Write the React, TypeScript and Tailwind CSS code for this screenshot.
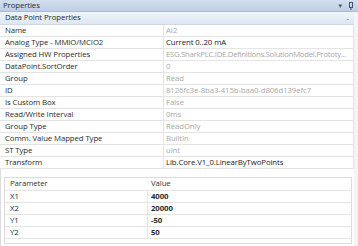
import React from "react";

const rows: { label: string; value: string; dim?: boolean; tight?: boolean }[] = [
  { label: "Name", value: "AI2", dim: true },
  { label: "Analog Type - MMIO/MCIO2", value: "Current 0..20 mA" },
  { label: "Assigned HW Properties", value: "ESG.SharkPLC.IDE.Definitions.SolutionModel.Prototy...", dim: true, tight: true },
  { label: "DataPoint.SortOrder", value: "0", dim: true },
  { label: "Group", value: "Read", dim: true },
  { label: "ID", value: "8126fc3e-8ba3-415b-baa0-d806d139efc7", dim: true },
  { label: "Is Custom Box", value: "False", dim: true },
  { label: "Read/Write Interval", value: "0ms", dim: true },
  { label: "Group Type", value: "ReadOnly", dim: true },
  { label: "Comm. Value Mapped Type", value: "BuiltIn", dim: true },
  { label: "ST Type", value: "uint", dim: true },
  { label: "Transform", value: "Lib.Core.V1_0.LinearByTwoPoints" },
];

const params = [
  { name: "X1", value: "4000" },
  { name: "X2", value: "20000" },
  { name: "Y1", value: "-50" },
  { name: "Y2", value: "50" },
];

export default function App() {
  return (
    <div className="w-[358px] h-[246px] bg-white overflow-hidden text-[7.8px] tracking-[-0.1px] leading-none text-[#2b2b2b] font-['Open_Sans',sans-serif]">
      {/* title bar */}
      <div className="h-[12px] flex items-center justify-between px-[3px] bg-gradient-to-b from-[#d3dfee] to-[#bfcfe3] border-b border-[#a9bbd4]">
        <span className="text-[#1e2d44]">Properties</span>
        <div className="flex items-center gap-[6px] pr-[2px] text-[#44546c]">
          <span className="text-[6px]">▼</span>
          <svg width="4" height="8" viewBox="0 0 4 8">
            <rect x="0.5" y="0.5" width="3" height="5" fill="none" stroke="#44546c" />
            <line x1="2" y1="6" x2="2" y2="8" stroke="#44546c" />
          </svg>
        </div>
      </div>

      <div className="flex h-[234px]">
        <div className="w-[354px] flex flex-col">
          {/* category */}
          <div className="h-[13px] flex items-center justify-between pl-[5px] pr-[5px] bg-gradient-to-b from-[#f1f5fb] to-[#dde7f3] border-b border-[#cfd9e6]">
            <span>Data Point Properties</span>
            <span className="text-[#555] text-[8px]">-</span>
          </div>

          {rows.map((r) => (
            <div key={r.label} className="h-[12px] flex border-b border-[#e4e4e4] border-r">
              <div className="w-[164px] flex items-center pl-[5px] border-r border-[#e4e4e4] whitespace-nowrap">
                {r.label}
              </div>
              <div
                className={`flex-1 flex items-center pl-[2px] whitespace-nowrap overflow-hidden ${
                  r.dim ? "text-[#a8a8a8]" : "text-[#222]"
                } ${r.tight ? "tracking-[-0.3px]" : ""}`}
              >
                {r.value}
              </div>
            </div>
          ))}

          {/* transform parameters */}
          <div className="flex-1 pl-[3px] pr-[2px] pt-[8px] pb-[2px] border-l border-[#dcdcdc]">
            <div className="border border-[#dcdcdc] h-full">
              <div className="h-[13px] flex border-b border-[#e4e4e4]">
                <div className="w-[143px] flex items-center pl-[5px] text-[#333]">Parameter</div>
                <div className="flex-1 flex items-center pl-[3px] text-[#333]">Value</div>
              </div>
              {params.map((p) => (
                <div key={p.name} className="h-[12px] flex border-b border-[#e4e4e4]">
                  <div className="w-[143px] flex items-center pl-[5px] border-r border-[#e4e4e4]">{p.name}</div>
                  <div className="flex-1 flex items-center pl-[3px] font-bold">{p.value}</div>
                </div>
              ))}
            </div>
          </div>
        </div>
        <div className="flex-1 bg-[#f4f4f4]" />
      </div>
    </div>
  );
}
